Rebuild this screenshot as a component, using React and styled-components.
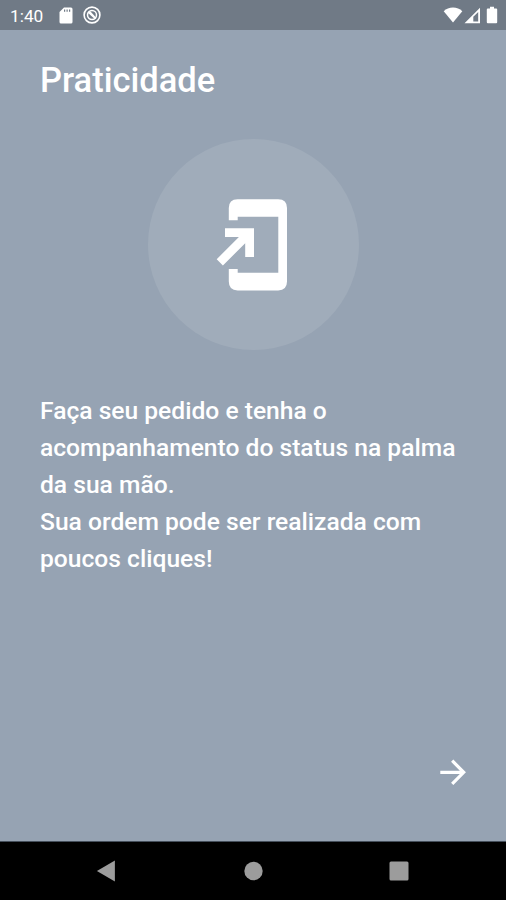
import React from 'react';
import styled, { createGlobalStyle } from 'styled-components';

const COLORS = {
  background: '#96a3b3',
  statusBar: '#707a86',
  circle: '#a0acba',
  text: '#fff',
  navIcon: '#9c9c9c',
};

const GlobalStyle = createGlobalStyle`
  * {
    box-sizing: border-box;
  }
  body {
    margin: 0;
    font-family: Roboto, sans-serif;
    background: ${COLORS.background};
  }
`;

const Screen = styled.div`
  display: flex;
  flex-direction: column;
  height: 900px;
  max-width: 506px;
  overflow: hidden;
  color: ${COLORS.text};
  background: ${COLORS.background};
`;

const StatusBar = styled.header`
  display: flex;
  align-items: center;
  justify-content: space-between;
  height: 30px;
  padding: 0 8px 0 10px;
  background: ${COLORS.statusBar};
`;

const StatusGroup = styled.div`
  display: flex;
  align-items: center;
  gap: ${({ $gap }) => $gap}px;
`;

const Time = styled.span`
  width: 36px;
  margin-right: 3px;
  padding-top: 2px;
  font-size: 17.3px;
  line-height: 28px;
`;

const Icon = styled.svg`
  display: block;
  flex: none;
  fill: ${({ $color }) => $color || COLORS.text};
`;

const Content = styled.main`
  display: flex;
  flex: 1;
  flex-direction: column;
  padding: 30px 40px 56px;
`;

const Title = styled.h1`
  margin: 0;
  font-size: 34.5px;
  font-weight: 500;
  line-height: 40px;
`;

const Circle = styled.div`
  display: flex;
  align-items: center;
  align-self: center;
  justify-content: center;
  width: 211px;
  height: 211px;
  margin: 39px 0 43px;
  border-radius: 50%;
  background: ${COLORS.circle};
`;

const Description = styled.p`
  margin: 0;
  font-size: 24.62px;
  font-weight: 500;
  line-height: 36.93px;
  white-space: nowrap;
`;

const NextButton = styled.button`
  display: flex;
  align-self: flex-end;
  margin-top: auto;
  padding: 0;
  border: 0;
  background: none;
`;

const NavBar = styled.nav`
  display: flex;
  align-items: center;
  justify-content: space-between;
  height: 59px;
  padding: 0 97px 0 95px;
  border-top: 1px solid #46505c;
  background: #000;
`;

const SdCardIcon = () => (
  <Icon width="14" height="17" viewBox="0 0 14 17">
    <path d="M5 .5h7A1.5 1.5 0 0 1 13.500 2v13a1.500 1.500 0 0 1-1.500 1.500H2A1.500 1.500 0 0 1 .5 15V5z" />
    <path d="M5.600 2.400v2.400M8.100 2.400v2.400M10.600 2.400v2.400" stroke={COLORS.statusBar} strokeWidth="1.200" />
  </Icon>
);

const SyncIcon = () => (
  <Icon width="18" height="18" viewBox="0 0 18 18">
    <circle cx="9" cy="9" r="7.9" fill="none" stroke={COLORS.text} strokeWidth="1.6" />
    <circle cx="9" cy="9" r="4.5" fill="none" stroke={COLORS.text} strokeWidth="1.5" />
    <path d="M4.500 6.500l3-1 6 6.500-1.500 1.200z" />
  </Icon>
);

const WifiIcon = () => (
  <Icon width="20" height="16" viewBox="0 0 20 16">
    <path d="M10 15.6L.7 4.2C3.2 1.8 6.4.5 10 .5s6.8 1.300 9.300 3.700z" />
  </Icon>
);

const SignalIcon = () => (
  <Icon width="17" height="17" viewBox="0 0 17 17">
    <path fillRule="evenodd" d="M.5 16.200L16 .7v15.500zM9.300 9.800v4.600h4.900V4.900z" />
  </Icon>
);

const BatteryIcon = () => (
  <Icon width="16" height="18" viewBox="-4 0 16 18">
    <path d="M4 .8h4v1.700h2.200q1 0 1 1v12.800q0 1-1 1H1.800q-1 0-1-1V3.500q0-1 1-1H4z" />
  </Icon>
);

// Phone outline open on the left, with an arrow entering the screen
const AddToHomeIcon = () => (
  <Icon width="100" height="100" viewBox="-0.5 0 100 100">
    <path d="M34.200 25.300H25.300V13q0-8.800 8.800-8.800h40.600q8.800 0 8.800 8.800v73.600q0 8.800-8.800 8.800H34.100q-8.800 0-8.800-8.800V74h8.900v3.700h40.600v-56H34.200z" />
    <path d="M21.500 33.300h29v28.800h-8.800V48.300L19.400 70.400l-6.200-6.200L35.400 42H21.500z" />
  </Icon>
);

const ArrowForwardIcon = () => (
  <Icon width="26" height="26" viewBox="0 0 26 26">
    <path
      d="M0.300 13.300H23.500M12.200 1.700L23.700 13.300L12.200 24.900"
      fill="none"
      stroke={COLORS.text}
      strokeWidth="3.2"
    />
  </Icon>
);

export default function App() {
  return (
    <>
      <GlobalStyle />
      <Screen>
        <StatusBar>
          <StatusGroup $gap={10}>
            <Time>1:40</Time>
            <SdCardIcon />
            <SyncIcon />
          </StatusGroup>
          <StatusGroup $gap={1}>
            <WifiIcon />
            <SignalIcon />
            <BatteryIcon />
          </StatusGroup>
        </StatusBar>
        <Content>
          <Title>Praticidade</Title>
          <Circle>
            <AddToHomeIcon />
          </Circle>
          <Description>
            Faça seu pedido e tenha o
            <br />
            acompanhamento do status na palma
            <br />
            da sua mão.
            <br />
            Sua ordem pode ser realizada com
            <br />
            poucos cliques!
          </Description>
          <NextButton aria-label="Próximo">
            <ArrowForwardIcon />
          </NextButton>
        </Content>
        <NavBar>
          <Icon width="20" height="22" viewBox="0 0 20 22" $color={COLORS.navIcon}>
            <path d="M1.900 11L19.900 .5v21z" />
          </Icon>
          <Icon width="22" height="20" viewBox="0 0 22 20" $color={COLORS.navIcon}>
            <circle cx="12.500" cy="10" r="9.200" />
          </Icon>
          <Icon width="20" height="20" viewBox="0 0 20 20" $color={COLORS.navIcon}>
            <rect x=".5" y=".5" width="19" height="19" rx="1.500" />
          </Icon>
        </NavBar>
      </Screen>
    </>
  );
}
